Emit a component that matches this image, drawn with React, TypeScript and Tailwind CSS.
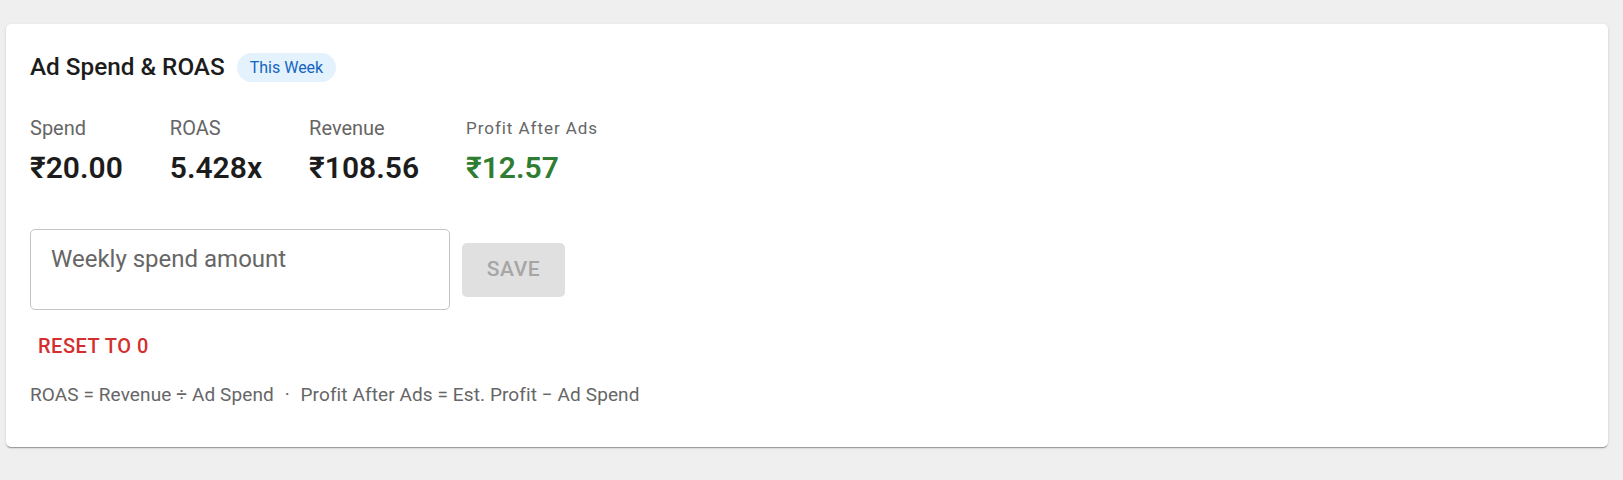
import { useState } from "react";

const FONT = { fontFamily: "Roboto, 'Liberation Sans', sans-serif" };

function Metric({
  label,
  value,
  green,
  small,
}: {
  label: string;
  value: string;
  green?: boolean;
  small?: boolean;
}) {
  return (
    <div className="flex flex-col gap-[7px]">
      <span
        className={
          small
            ? "text-[17px] leading-[30px] tracking-[0.95px] text-[#666666]"
            : "text-[20px] leading-[30px] text-[#666666]"
        }
      >
        {label}
      </span>
      <span
        className={`text-[30px] leading-[36px] font-semibold ${
          green ? "text-[#2e7d32]" : "text-[#1c1c1c]"
        }`}
      >
        {value}
      </span>
    </div>
  );
}

export default function App() {
  const [spend, setSpend] = useState("");

  return (
    <div
      className="min-h-[480px] bg-[#efefef] pt-6 pl-[6px] pr-[15px]"
      style={FONT}
    >
      <div className="bg-white rounded-[5px] shadow-[0_2px_1px_-1px_rgba(0,0,0,0.2),0_1px_1px_0_rgba(0,0,0,0.14),0_1px_3px_0_rgba(0,0,0,0.12)] px-6 pt-6 pb-10">
        {/* header */}
        <div className="flex items-center gap-3 h-[38px]">
          <h2 className="text-[24.3px] font-medium text-[#1c1c1c] leading-[38px]">
            Ad Spend &amp; ROAS
          </h2>
          <span className="h-[29px] px-[13px] rounded-full bg-[#e3f2fd] text-[#1565c0] text-[16px] leading-[29px]">
            This Week
          </span>
        </div>

        {/* metrics */}
        <div className="flex gap-[47px] mt-[27px]">
          <Metric label="Spend" value="₹20.00" />
          <Metric label="ROAS" value="5.428x" />
          <Metric label="Revenue" value="₹108.56" />
          <Metric label="Profit After Ads" value="₹12.57" green small />
        </div>

        {/* input row */}
        <div className="flex items-center gap-3 mt-[43px]">
          <textarea
            value={spend}
            onChange={(e) => setSpend(e.target.value)}
            placeholder="Weekly spend amount"
            className="w-[420px] h-[81px] resize-none border border-[#c4c4c4] rounded-[5px] pl-5 pr-5 pt-[12px] text-[24px] leading-[34px] text-[#1c1c1c] placeholder:text-[#666666] outline-none"
          />
          <button
            disabled
            className="w-[103px] h-[54px] rounded-[5px] bg-[#e0e0e0] text-[#a6a6a6] text-[21px] font-medium tracking-[0.6px]"
          >
            SAVE
          </button>
        </div>

        {/* reset */}
        <div className="mt-[15px]">
          <button className="px-2 py-[7px] text-[20px] leading-[28px] font-medium tracking-[0.5px] text-[#d32f2f] rounded-[5px]">
            RESET TO 0
          </button>
        </div>

        {/* formula note */}
        <p className="mt-4 text-[19px] leading-[24px] tracking-[0.1px] text-[#666666]">
          ROAS = Revenue ÷ Ad Spend <span className="mx-[6px]">·</span> Profit
          After Ads = Est. Profit − Ad Spend
        </p>
      </div>
    </div>
  );
}
